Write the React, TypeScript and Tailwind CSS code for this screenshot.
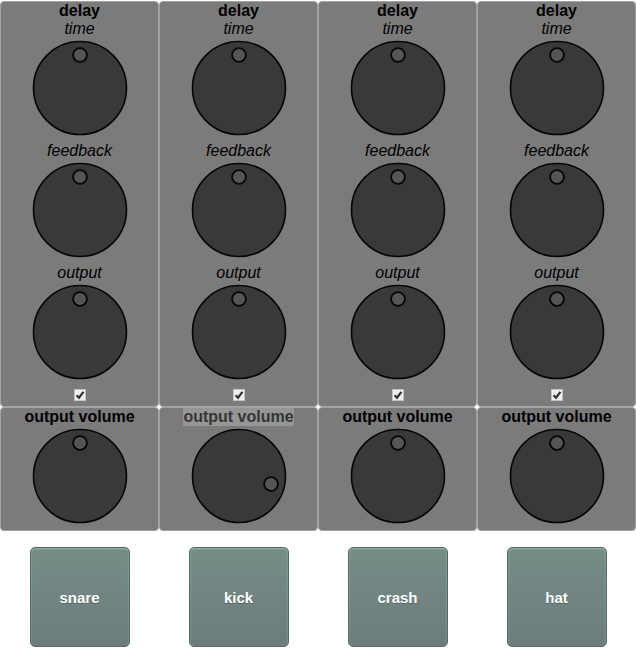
import { useState } from "react";

const channels = [
  { name: "snare", volume: 0 },
  { name: "kick", volume: 104, selected: true },
  { name: "crash", volume: 0 },
  { name: "hat", volume: 0 },
];

const panel =
  "flex flex-col items-center rounded-[4px] border border-[#a3a3a3] bg-[#7b7b7b]";

function Knob({ label, initial = 0 }: { label: string; initial?: number }) {
  const [angle, setAngle] = useState(initial);
  return (
    <div className="relative mb-1 size-[100px]">
      <svg viewBox="0 0 100 100" className="block size-full" aria-hidden="true">
        <circle cx="50" cy="50" r="46.5" fill="#393939" stroke="#050505" strokeWidth="1.6" />
        <g transform={`rotate(${angle} 50 50)`}>
          <circle cx="50" cy="17" r="6.9" fill="#555555" stroke="#050505" strokeWidth="1.8" />
        </g>
      </svg>
      <input
        type="range"
        min={0}
        max={359}
        value={angle}
        onChange={(e) => setAngle(Number(e.target.value))}
        aria-label={label}
        className="absolute inset-0 m-0 size-full cursor-pointer opacity-0"
      />
    </div>
  );
}

function Toggle({ label }: { label: string }) {
  return (
    <label className="flex h-5 items-start justify-center pt-[3px]">
      <span className="relative block size-3">
        <input
          type="checkbox"
          defaultChecked
          aria-label={label}
          className="peer block size-3 appearance-none border border-[#c4c4c4] bg-[#eeeeee]"
        />
        <svg
          viewBox="0 0 12 12"
          className="pointer-events-none absolute inset-0 hidden size-3 peer-checked:block"
          aria-hidden="true"
        >
          <path d="M2.6 6.2 L5 8.7 L9.4 2.8" fill="none" stroke="#333333" strokeWidth="2.2" />
        </svg>
      </span>
    </label>
  );
}

export default function App() {
  return (
    <main className="grid grid-cols-4 bg-white pt-px font-['Liberation_Sans',Arial,sans-serif] text-base leading-[18px] text-black">
      {channels.map(({ name, volume, selected }) => (
        <section key={name} aria-label={name}>
          <div className={panel}>
            <h2 className="font-bold">delay</h2>
            {["time", "feedback", "output"].map((param) => (
              <div key={param} className="flex flex-col items-center">
                <em>{param}</em>
                <Knob label={`${name} delay ${param}`} />
              </div>
            ))}
            <Toggle label={`${name} delay on`} />
          </div>
          <div className={panel}>
            <h2
              className={
                selected ? "bg-[#969696] font-bold text-[#353535]" : "font-bold"
              }
            >
              output volume
            </h2>
            <Knob label={`${name} output volume`} initial={volume} />
          </div>
          <div className="flex justify-center py-4">
            <button
              type="button"
              className="size-[100px] rounded-[5px] border border-[#566963] bg-linear-to-b from-[#768d87] to-[#6c7c7c] pt-0.5 text-[15px] font-bold text-white shadow-[inset_0_1px_2px_#91b8b3] text-shadow-[0_1px_0_#4f6666]"
            >
              {name}
            </button>
          </div>
        </section>
      ))}
    </main>
  );
}
